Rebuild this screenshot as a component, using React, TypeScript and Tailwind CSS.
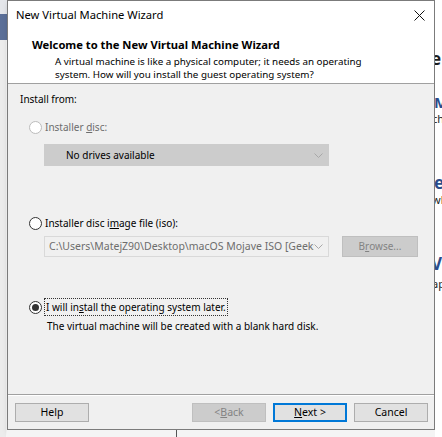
import React from "react";

const font = { fontFamily: '"Noto Sans", "Segoe UI", sans-serif' };

function Radio({ checked, disabled }: { checked?: boolean; disabled?: boolean }) {
  return (
    <span
      className={`flex h-[13px] w-[13px] shrink-0 items-center justify-center rounded-full border bg-white ${
        disabled ? "border-[#bcbcbc]" : "border-[#333333]"
      }`}
    >
      {checked && <span className="h-[7px] w-[7px] rounded-full bg-[#333333]" />}
    </span>
  );
}

function Chevron({ color }: { color: string }) {
  return (
    <svg width="9" height="5" viewBox="0 0 9 5" className="shrink-0">
      <path d="M0.5 0.5 L4.5 4.5 L8.5 0.5" fill="none" stroke={color} strokeWidth="1" />
    </svg>
  );
}

function Button({
  children,
  disabled,
  focused,
}: {
  children: React.ReactNode;
  disabled?: boolean;
  focused?: boolean;
}) {
  return (
    <div
      className={`flex h-[19px] w-[74px] shrink-0 items-center justify-center text-[10.5px] leading-none ${
        disabled
          ? "border border-[#bfbfbf] bg-[#cccccc] text-[#838383]"
          : focused
          ? "border-2 border-[#0078d7] bg-[#e1e1e1] text-black"
          : "border border-[#adadad] bg-[#e1e1e1] text-black"
      }`}
    >
      {children}
    </div>
  );
}

export default function App() {
  return (
    <div className="flex h-[437px] w-[442px] overflow-hidden bg-white" style={font}>
      {/* left background strip */}
      <div className="flex w-[7px] shrink-0 flex-col bg-[#eeeeee]">
        <div className="h-[14px] bg-[#e4e6ea]" />
        <div className="h-[26px] bg-[#5b6f98]" />
        <div className="flex-1 border-r border-[#f7f7f7] bg-[#ececec]" />
      </div>

      {/* center column */}
      <div className="flex w-[428px] shrink-0 flex-col">
        <div className="flex h-[430px] shrink-0 flex-col border border-[#7b7b7b] bg-[#f0f0f0] shadow-[2px_3px_6px_rgba(0,0,0,0.25)]">
          {/* title bar */}
          <div className="flex h-[29px] shrink-0 items-center justify-between bg-white pl-[8px] pr-[9px]">
            <span className="text-[11.2px] text-black">New Virtual Machine Wizard</span>
            <svg width="11" height="11" viewBox="0 0 11 11">
              <path d="M0.5 0.5 L10.5 10.5 M10.5 0.5 L0.5 10.5" stroke="#111" strokeWidth="1" />
            </svg>
          </div>
          {/* header */}
          <div className="flex h-[53px] shrink-0 flex-col bg-white pl-[24px] pt-[8px]">
            <span className="h-[14px] text-[11.2px] font-bold leading-[14px] text-black">
              Welcome to the New Virtual Machine Wizard
            </span>
            <span className="mt-[3px] pl-[23px] text-[9.8px] leading-[13px] text-black">
              A virtual machine is like a physical computer; it needs an operating
              <br />
              system. How will you install the guest operating system?
            </span>
          </div>
          <div className="h-px shrink-0 bg-[#a0a0a0]" />

          {/* body */}
          <div className="flex flex-1 flex-col text-[10px]">
            <div className="mt-[8px] flex h-[14px] shrink-0 items-center pl-[12px] text-black">
              Install from:
            </div>

            <div className="mt-[14px] flex h-[14px] shrink-0 items-center gap-[3px] pl-[21px] text-[#6d6d6d]">
              <Radio disabled />
              <span>
                Installer <span className="underline">d</span>isc:
              </span>
            </div>
            <div className="ml-[36px] mt-[10px] flex h-[22px] w-[285px] shrink-0 items-center justify-between bg-[#cccccc] pl-[22px] pr-[6px] text-black">
              <span>No drives available</span>
              <Chevron color="#a8a8a8" />
            </div>

            <div className="mt-[50px] flex h-[14px] shrink-0 items-center gap-[3px] pl-[21px] text-black">
              <Radio />
              <span>
                Installer disc i<span className="underline">m</span>age file (iso):
              </span>
            </div>
            <div className="mt-[6px] flex h-[21px] shrink-0 items-center pl-[36px]">
              <div className="flex h-[21px] w-[285px] items-center justify-between border border-[#d9d9d9] bg-[#f0f0f0] pl-[4px] pr-[5px] text-[10.5px] text-[#6d6d6d]">
                <span className="w-[269px] overflow-hidden whitespace-nowrap">
                  C:\Users\MatejZ90\Desktop\macOS Mojave ISO [Geeks]
                </span>
                <Chevron color="#a8a8a8" />
              </div>
              <div className="ml-[13px] flex h-[21px] w-[76px] items-center justify-center border border-[#bfbfbf] bg-[#cccccc] text-[#838383]">
                B<span className="underline">r</span>owse...
              </div>
            </div>

            <div className="mt-[41px] flex h-[18px] shrink-0 items-center gap-[2px] pl-[21px] text-black">
              <Radio checked />
              <span className="flex h-[18px] items-center border border-dotted border-[#333] px-px">
                I will in<span className="underline">s</span>tall the operating system later.
              </span>
            </div>
            <div className="mt-[3px] flex h-[14px] shrink-0 items-center pl-[39px] text-black">
              The virtual machine will be created with a blank hard disk.
            </div>

            <div className="flex-1" />
            <div className="h-px shrink-0 bg-[#a0a0a0]" />
            <div className="h-px shrink-0 bg-white" />
            <div className="flex h-[33px] shrink-0 items-start pl-[7px] pr-[6px] pt-[7px]">
              <Button>Help</Button>
              <div className="flex-1" />
              <Button disabled>
                &lt; <span className="underline">B</span>ack
              </Button>
              <div className="w-[7px]" />
              <Button focused>
                <span className="underline">N</span>ext &gt;
              </Button>
              <div className="w-[7px]" />
              <Button>Cancel</Button>
            </div>
          </div>
        </div>
        {/* bottom background */}
        <div className="flex flex-1 bg-[#f4f4f4]">
          <div className="w-[169px]" />
          <div className="w-px bg-[#555]" />
        </div>
      </div>

      {/* right background strip */}
      <div className="flex flex-1 flex-col overflow-hidden bg-white text-[13px] leading-none">
        <div className="-ml-[4px] mt-[50px] text-[17px] font-bold text-[#1c1c1c]">e</div>
        <div className="-ml-[1px] mt-[28px] text-[15px] font-bold text-[#2a4c8a]">M</div>
        <div className="-ml-[3px] mt-[3px] text-[11px] text-[#222]">ch</div>
        <div className="-ml-[1px] mt-[50px] text-[17px] font-bold text-[#2a4c8a]">e</div>
        <div className="-ml-[3px] mt-[3px] text-[11px] text-[#222]">wl</div>
        <div className="-ml-[4px] mt-[50px] text-[17px] font-bold text-[#2a4c8a]">Vo</div>
        <div className="-ml-[3px] mt-[6px] text-[11px] text-[#222]">ap</div>
      </div>
    </div>
  );
}
